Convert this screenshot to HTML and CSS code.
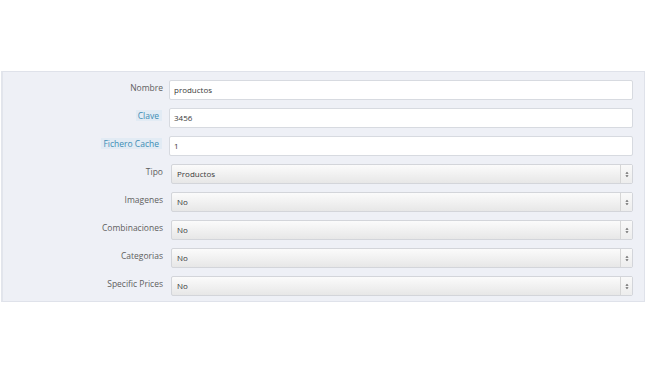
FILE: index.html
```html
<!DOCTYPE html>
<html>
<head>
<meta charset="utf-8">
<link rel="stylesheet" href="styles.css">
</head>
<body>
<div class="panel">
  <div class="row"><div class="label"><span>Nombre</span></div><div class="input">productos</div></div>
  <div class="row"><div class="label"><span class="hl">Clave</span></div><div class="input">3456</div></div>
  <div class="row"><div class="label"><span class="hl">Fichero Cache</span></div><div class="input">1</div></div>
  <div class="row"><div class="label"><span>Tipo</span></div><div class="select"><span class="val">Productos</span><span class="arrow"><svg width="4" height="7" viewBox="0 0 4 7"><path d="M2 0.8L3.6 2.8H0.4Z M2 6.2L3.6 4.2H0.4Z" fill="#666"/></svg></span></div></div>
  <div class="row"><div class="label"><span>Imagenes</span></div><div class="select"><span class="val">No</span><span class="arrow"><svg width="4" height="7" viewBox="0 0 4 7"><path d="M2 0.8L3.6 2.8H0.4Z M2 6.2L3.6 4.2H0.4Z" fill="#666"/></svg></span></div></div>
  <div class="row"><div class="label"><span>Combinaciones</span></div><div class="select"><span class="val">No</span><span class="arrow"><svg width="4" height="7" viewBox="0 0 4 7"><path d="M2 0.8L3.6 2.8H0.4Z M2 6.2L3.6 4.2H0.4Z" fill="#666"/></svg></span></div></div>
  <div class="row"><div class="label"><span>Categorias</span></div><div class="select"><span class="val">No</span><span class="arrow"><svg width="4" height="7" viewBox="0 0 4 7"><path d="M2 0.8L3.6 2.8H0.4Z M2 6.2L3.6 4.2H0.4Z" fill="#666"/></svg></span></div></div>
  <div class="row"><div class="label"><span>Specific Prices</span></div><div class="select"><span class="val">No</span><span class="arrow"><svg width="4" height="7" viewBox="0 0 4 7"><path d="M2 0.8L3.6 2.8H0.4Z M2 6.2L3.6 4.2H0.4Z" fill="#666"/></svg></span></div></div>
</div>
</body>
</html>
```
FILE: styles.css
```css
html, body { margin: 0; padding: 0; background: #fff; }
body { font-family: "Open Sans", "Liberation Sans", sans-serif; }
.panel {
  margin-top: 71px;
  margin-left: 1px;
  width: 644px;
  box-sizing: border-box;
  height: 231px;
  background: #eef0f6;
  border: 1px solid #dfe2ea;
  border-left: 2px solid #e2e5ec;
  padding: 8px 11px 0 0;
  display: flex;
  flex-direction: column;
  gap: 8px;
}
.row { display: flex; align-items: flex-start; height: 20px; }
.label {
  width: 160px; flex: none; text-align: right;
  font-size: 8.5px; color: #5e5e5e; padding-top: 2px; margin-right: 6px;
}
.label span { display: inline-block; line-height: 11px; }
.label span.hl { background: #e2ebf4; color: #3d8db4; padding: 0 3px 0 2px; margin-right: 1px; }
.input {
  flex: 1; height: 20px; box-sizing: border-box;
  background: #fff; border: 1px solid #d7dae0; border-radius: 2px;
  font-size: 8px; color: #3a3a3a; padding: 0 4px; line-height: 18px;
}
.select {
  flex: 1; height: 20px; box-sizing: border-box; display: flex; align-items: center;
  margin-left: 2px;
  background: linear-gradient(#fbfbfb, #e7e7e7);
  border: 1px solid #d3d5da; border-radius: 2px;
  font-size: 8px; color: #3a3a3a;
}
.select .val { flex: 1; padding-left: 5px; line-height: 18px; }
.select .arrow {
  width: 11px; height: 18px; border-left: 1px solid #d6d6d6;
  display: flex; align-items: center; justify-content: center;
  background: linear-gradient(#f9f9f9, #ededed);
}
```
